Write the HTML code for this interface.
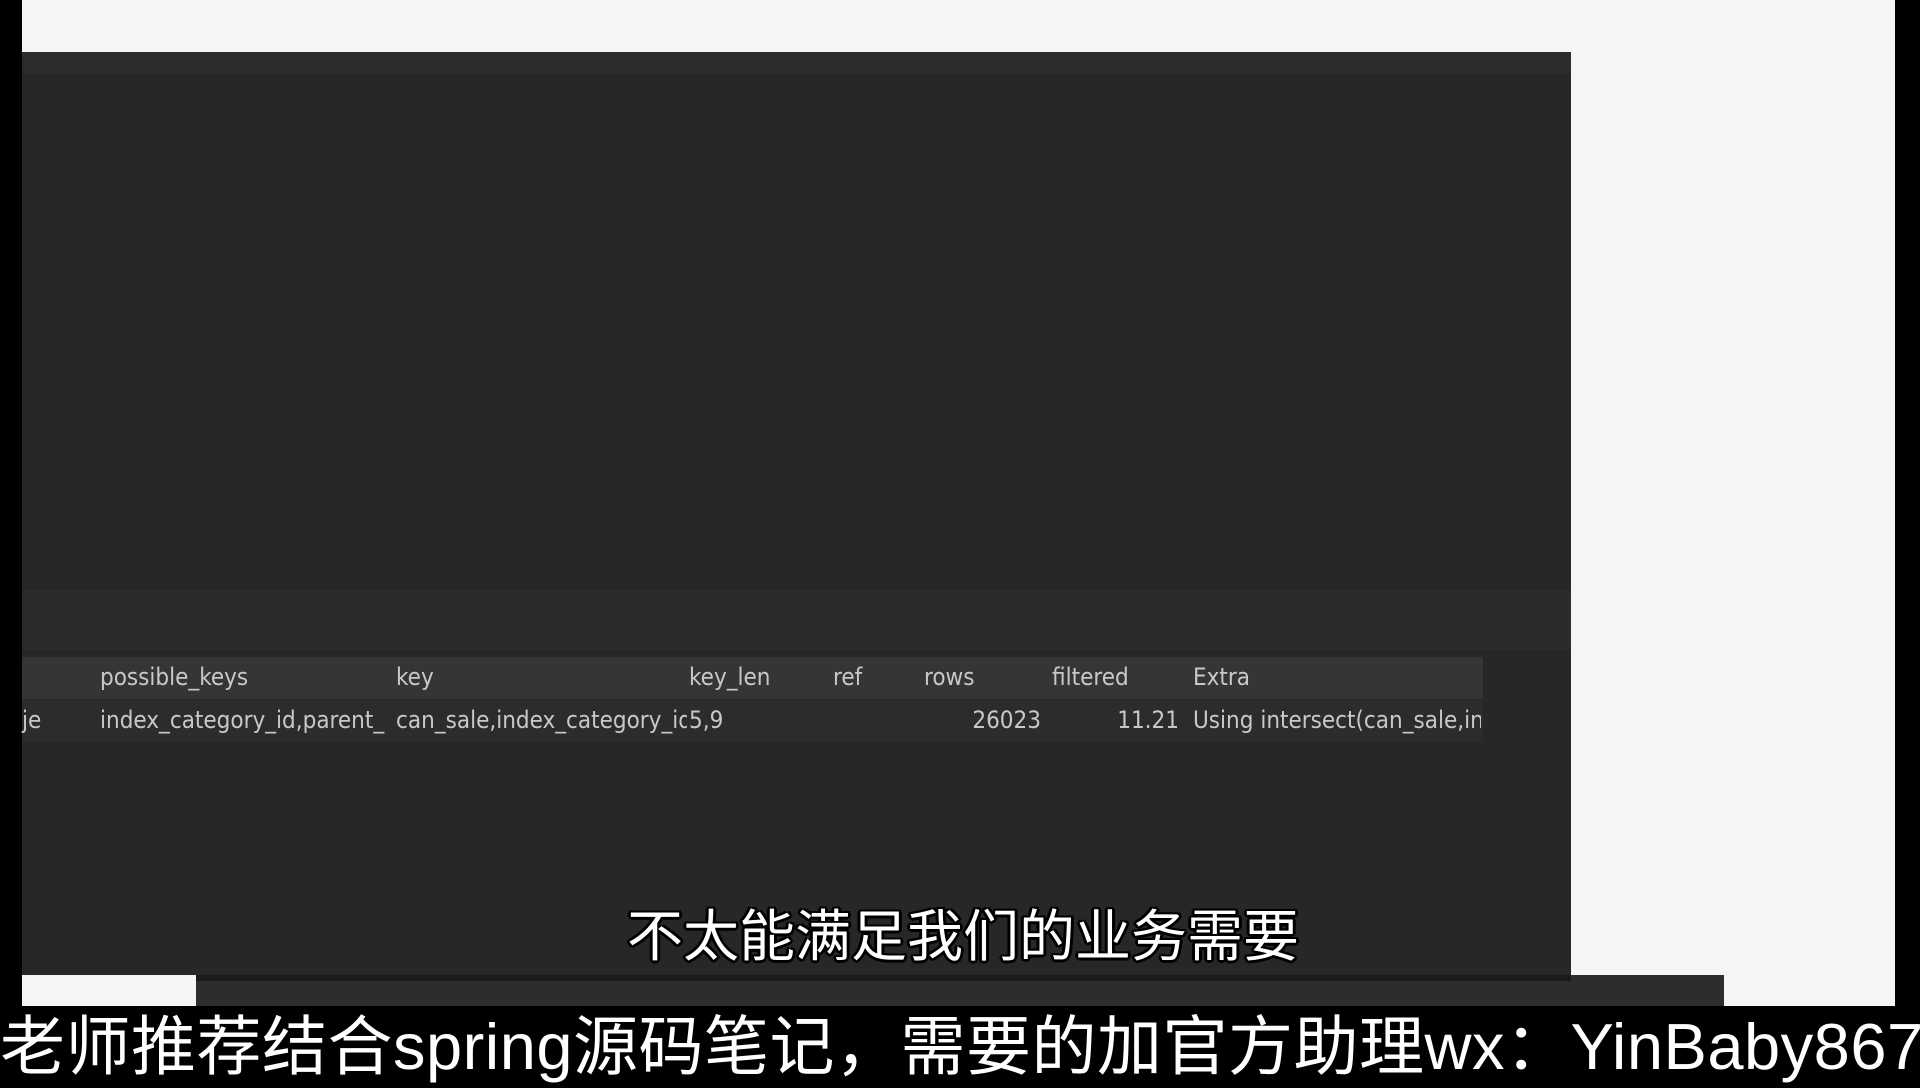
<!DOCTYPE html>
<html><head><meta charset="utf-8"><style>
body{margin:0;width:1920px;height:1080px;background:#000;position:relative;overflow:hidden;font-family:"Liberation Sans","Noto Sans CJK SC",sans-serif}
div{position:absolute}
.t{color:#c8c8c8;font-size:24px;white-space:nowrap;font-family:"DejaVu Sans Condensed","Liberation Sans",sans-serif}
</style></head><body>
<div style="left:22px;top:0;width:1873px;height:1006px;background:#f5f5f5"></div>
<div style="left:22px;top:52px;width:1549px;height:923px;background:#272727"></div>
<div style="left:22px;top:52px;width:1549px;height:22px;background:#2c2c2c"></div>
<div style="left:22px;top:590px;width:1549px;height:60px;background:#2b2b2b"></div>
<div style="left:22px;top:657px;width:1461px;height:42px;background:#353535"></div>
<div style="left:22px;top:700px;width:1461px;height:42px;background:#2c2c2c"></div>
<div style="left:196px;top:975px;width:1528px;height:31px;background:#2d2d2d"></div>
<div style="left:196px;top:975px;width:1375px;height:6px;background:#1a1a1a"></div>
<div class="t" style="left:100px;top:663px">possible_keys</div>
<div class="t" style="left:396px;top:663px">key</div>
<div class="t" style="left:689px;top:663px">key_len</div>
<div class="t" style="left:833px;top:663px">ref</div>
<div class="t" style="left:924px;top:663px">rows</div>
<div class="t" style="left:1052px;top:663px">filtered</div>
<div class="t" style="left:1193px;top:663px">Extra</div>
<div class="t" style="left:22px;top:706px">je</div>
<div class="t" style="left:100px;top:706px;width:292px;overflow:hidden">index_category_id,parent_</div>
<div class="t" style="left:396px;top:706px;width:291px;overflow:hidden">can_sale,index_category_id</div>
<div class="t" style="left:689px;top:706px">5,9</div>
<div class="t" style="left:940px;top:706px;width:101px;text-align:right">26023</div>
<div class="t" style="left:1080px;top:706px;width:99px;text-align:right">11.21</div>
<div class="t" style="left:1193px;top:706px;width:288px;overflow:hidden">Using intersect(can_sale,index</div>
<div style="left:627px;top:892px;font-size:56px;color:#fff;white-space:nowrap;text-shadow:-2px -2px 0 #000,2px -2px 0 #000,-2px 2px 0 #000,2px 2px 0 #000,0 3px 0 #000,3px 0 0 #000,-3px 0 0 #000">不太能满足我们的业务需要</div>
<div style="left:0;top:994px;width:1920px;font-size:65px;color:#fff;white-space:nowrap;letter-spacing:0.5px">老师推荐结合spring源码笔记，需要的加官方助理wx：YinBaby867</div>
</body></html>
